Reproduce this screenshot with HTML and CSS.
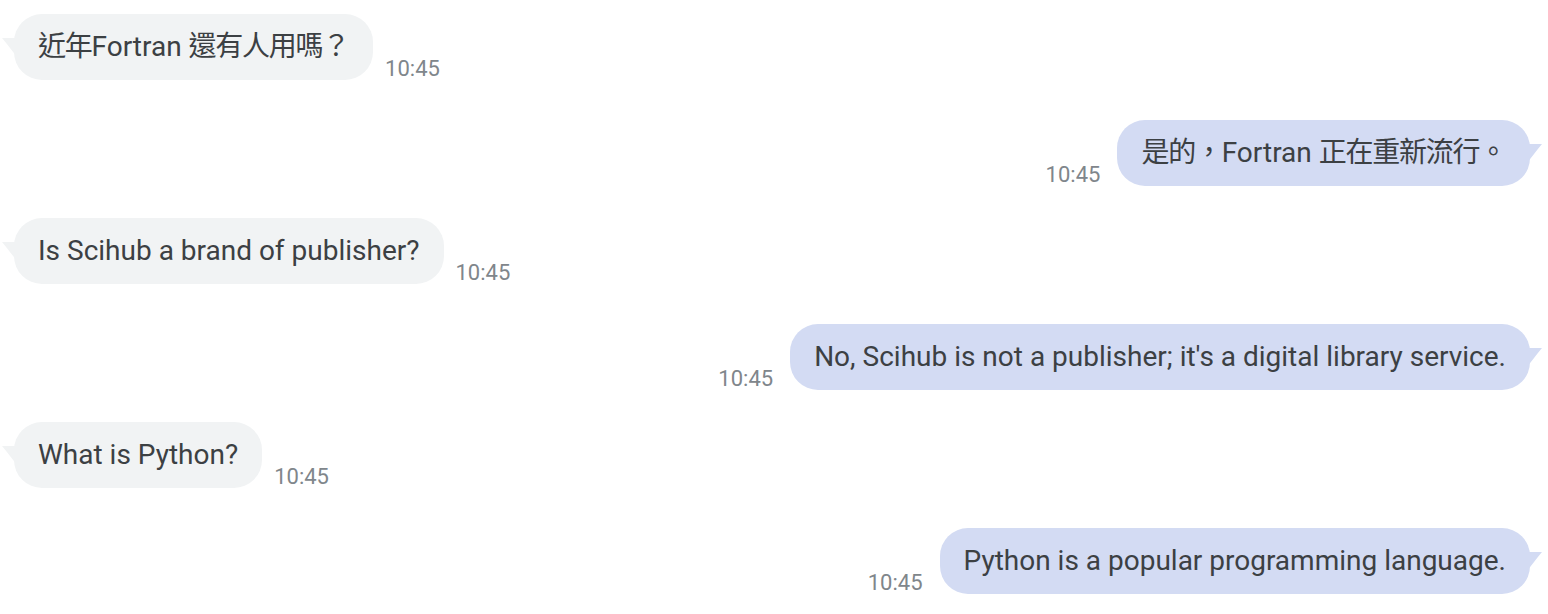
FILE: index.html
```html
<!DOCTYPE html>
<html lang="zh-Hant">
<head>
<meta charset="utf-8">
<title>Chat</title>
<link rel="stylesheet" href="styles.css">
</head>
<body>
<div class="chat">
  <div class="row in">
    <div class="bubble">
      <svg class="tail" width="16" height="20" viewBox="0 0 16 20"><path d="M0 0H16V20C11 14 5 6 0 0Z"/></svg>
      <span class="cjk">近年</span>Fortran <span class="cjk">還有人用嗎？</span>
    </div>
    <span class="time">10:45</span>
  </div>
  <div class="row out">
    <span class="time">10:45</span>
    <div class="bubble">
      <svg class="tail" width="16" height="20" viewBox="0 0 16 20"><path d="M16 0H0V20C5 14 11 6 16 0Z"/></svg>
      <span class="cjk">是的，</span>Fortran <span class="cjk">正在重新流行。</span>
    </div>
  </div>
  <div class="row in">
    <div class="bubble">
      <svg class="tail" width="16" height="20" viewBox="0 0 16 20"><path d="M0 0H16V20C11 14 5 6 0 0Z"/></svg>
      Is Scihub a brand of publisher?
    </div>
    <span class="time">10:45</span>
  </div>
  <div class="row out">
    <span class="time">10:45</span>
    <div class="bubble">
      <svg class="tail" width="16" height="20" viewBox="0 0 16 20"><path d="M16 0H0V20C5 14 11 6 16 0Z"/></svg>
      No, Scihub is not a publisher; it's a digital library service.
    </div>
  </div>
  <div class="row in">
    <div class="bubble">
      <svg class="tail" width="16" height="20" viewBox="0 0 16 20"><path d="M0 0H16V20C11 14 5 6 0 0Z"/></svg>
      What is Python?
    </div>
    <span class="time">10:45</span>
  </div>
  <div class="row out">
    <span class="time">10:45</span>
    <div class="bubble">
      <svg class="tail" width="16" height="20" viewBox="0 0 16 20"><path d="M16 0H0V20C5 14 11 6 16 0Z"/></svg>
      Python is a popular programming language.
    </div>
  </div>
</div>
</body>
</html>
```

FILE: styles.css
```css
html, body {
  margin: 0;
  padding: 0;
  background: #ffffff;
}

.chat {
  display: flex;
  flex-direction: column;
  padding: 14px 18px 0 14px;
  font-family: Roboto, "Noto Sans CJK TC", sans-serif;
}

.row {
  display: flex;
  align-items: flex-end;
}

.row.in {
  justify-content: flex-start;
  margin-bottom: 40px;
}

.row.out {
  justify-content: flex-end;
  margin-bottom: 32px;
}

.bubble {
  position: relative;
  padding: 16px 24px;
  font-size: 28px;
  line-height: 34px;
  color: #3c4043;
  border-radius: 28px;
  white-space: nowrap;
}

.cjk {
  letter-spacing: -1.25px;
}

.row.in .bubble {
  background: #f1f3f4;
}

.row.out .bubble {
  background: #d3dbf3;
}

.tail {
  position: absolute;
  top: 24px;
}

.row.in .tail {
  left: -12px;
  fill: #f1f3f4;
}

.row.out .tail {
  right: -12px;
  fill: #d3dbf3;
}

.time {
  font-size: 22px;
  line-height: 22px;
  color: #80868b;
}

.row.in .time {
  margin-left: 12px;
}

.row.out .time {
  margin-right: 17px;
}
```
